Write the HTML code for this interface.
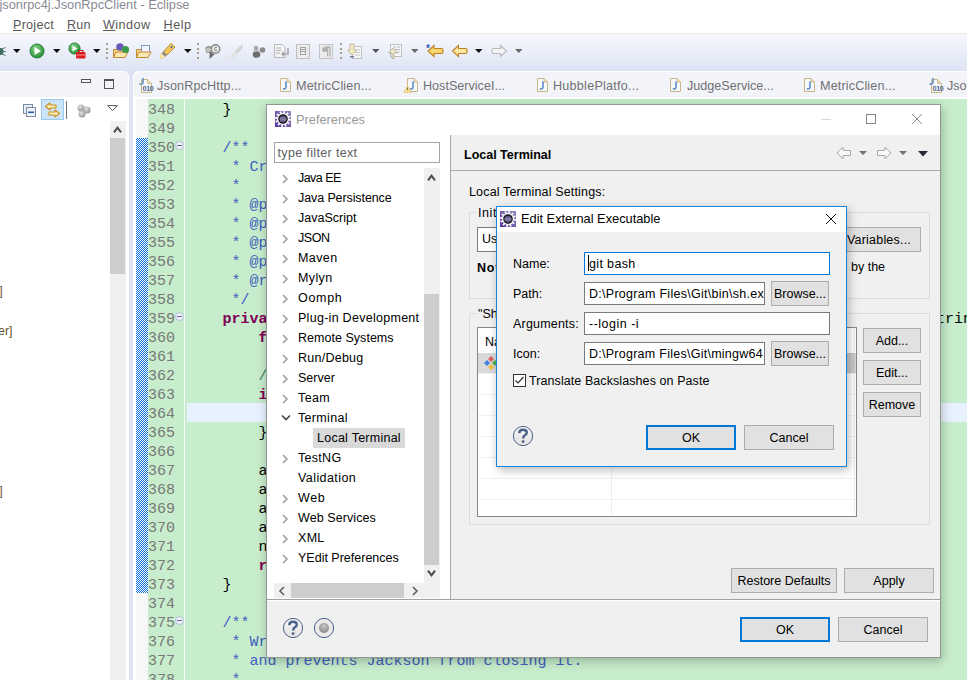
<!DOCTYPE html>
<html><head><meta charset="utf-8">
<style>
*{margin:0;padding:0;box-sizing:border-box}
html,body{width:967px;height:680px;overflow:hidden;background:#fff;position:relative;font-family:"Liberation Sans",sans-serif;font-size:12.5px;color:#000}
.a{position:absolute}
.t{position:absolute;white-space:pre;line-height:1}
/* title + menu */
#title{left:-0.5px;top:-1.5px;font-size:12.8px;color:#8a8a95}
.menu{top:19px;font-size:12.6px;color:#585858}
.menu u{text-decoration:underline;text-decoration-thickness:1px;text-underline-offset:0.5px}
#toolbar{left:0;top:33px;width:967px;height:38px;background:linear-gradient(#ebebea 0,#ebebea 1px,#f5f6fa 1px,#f1f4fc 25%,#dde3f3 100%)}
#below{left:0;top:71px;width:967px;height:609px;background:#dfe4f4}
/* left panel */
#lp{left:0;top:71px;width:129px;height:620px;background:#fff;border-top-right-radius:6px;border-right:1px solid #fff}
#lphead{left:0;top:71px;width:128px;height:26px;background:#f3f4fa;border-top-right-radius:6px;border-top:1px solid #fff}
/* editor */
#ed{left:133px;top:71px;width:840px;height:620px;background:#fff;border-top-left-radius:6px}
#edhead{left:134px;top:72px;width:840px;height:25px;background:#f3f4fa;border-top-left-radius:6px}
.tab{top:80px;font-size:12.6px;color:#707070}
#ruler{left:136px;top:99px;width:12px;height:581px;background:#f7f7f7}
#lnum{left:148px;top:99px;width:36px;height:581px;background:#c7edcc}
#code{left:185px;top:99px;width:782px;height:581px;background:#c7edcc}
#sep{left:184px;top:99px;width:1px;height:581px;background:#f6fbf6}
#checker{left:136px;top:138px;width:12px;height:455px;background:repeating-conic-gradient(#0a6fe0 0 25%,#fff 0 50%) 0 0/2px 2px;}
.ln{position:absolute;left:148px;width:27px;font-family:"Liberation Mono",monospace;font-size:15px;line-height:19px;color:#787878;white-space:pre}
.cl{position:absolute;left:186.4px;font-family:"Liberation Mono",monospace;font-size:15px;line-height:19px;color:#000;white-space:pre}
.jd{color:#3f5fbf}.kw{color:#7f0055;font-weight:bold}.cm{color:#3f7f5f}
/* dialogs */
#pref{left:266px;top:104px;width:675px;height:554px;background:#f0f0f0;border:1px solid #8f9a8f;box-shadow:1px 3px 10px rgba(0,0,0,.25)}
#edit{left:496px;top:206px;width:351px;height:261px;background:#f0f0f0;border:1px solid #1883d7;box-shadow:2px 3px 9px rgba(0,0,0,.28)}
.btn{position:absolute;background:#e1e1e1;border:1px solid #adadad;text-align:center;font-size:12.5px;color:#000}
.btn.def{border:2px solid #0078d7}
.tb{position:absolute;background:#fff;border:1px solid #7a7a7a;font-size:12.5px;white-space:pre;overflow:hidden}
</style></head><body>
<div class="t" id="title">jsonrpc4j.JsonRpcClient - Eclipse</div>
<div class="t menu" style="left:13px;letter-spacing:.25px"><u>P</u>roject</div>
<div class="t menu" style="left:67px;letter-spacing:.2px"><u>R</u>un</div>
<div class="t menu" style="left:103px;letter-spacing:.45px"><u>W</u>indow</div>
<div class="t menu" style="left:163.5px;letter-spacing:.55px"><u>H</u>elp</div>
<div class="a" id="toolbar"></div>
<div class="a" id="below"></div>
<svg class="a" style="left:0px;top:45px" width="8" height="12"><ellipse cx="0.5" cy="6.5" rx="3" ry="3.5" fill="#3e6e62"/><path d="M2 4L5.5 2.5M2.5 6.5H6M2 9L5.5 10.5" stroke="#4a7a6a" stroke-width="1"/></svg>
<svg class="a" style="left:13px;top:49px" width="8" height="5"><path d="M0 0H7.5L3.75 4Z" fill="#111"/></svg>
<svg class="a" style="left:29px;top:43px" width="16" height="16"><defs><radialGradient id="g1" cx=".4" cy=".35" r=".7"><stop offset="0" stop-color="#8ad88a"/><stop offset="1" stop-color="#1e8a2e"/></radialGradient></defs><circle cx="8" cy="8" r="7" fill="url(#g1)" stroke="#2a7a3a" stroke-width="1"/><path d="M5.5 4L12 8L5.5 12Z" fill="#fff"/></svg>
<svg class="a" style="left:53px;top:49px" width="8" height="5"><path d="M0 0H7.5L3.75 4Z" fill="#111"/></svg>
<svg class="a" style="left:68px;top:42px" width="18" height="17"><circle cx="6.5" cy="6.5" r="5.6" fill="url(#g1)" stroke="#2a7a3a" stroke-width=".9"/><path d="M4.5 3.5L9.5 6.5L4.5 9.5Z" fill="#fff"/><rect x="8" y="10" width="9.5" height="6.5" rx="1" fill="#e02020"/><rect x="10.5" y="8.5" width="4.5" height="2.5" fill="none" stroke="#c01818" stroke-width="1"/><path d="M8.5 13H17" stroke="#ffb0b0" stroke-width=".8"/></svg>
<svg class="a" style="left:93px;top:49px" width="8" height="5"><path d="M0 0H7.5L3.75 4Z" fill="#111"/></svg>
<div class="a" style="left:106px;top:43px;width:2px;height:2px;background:#a8a08a"></div>
<div class="a" style="left:106px;top:47.5px;width:2px;height:2px;background:#a8a08a"></div>
<div class="a" style="left:106px;top:52px;width:2px;height:2px;background:#a8a08a"></div>
<div class="a" style="left:106px;top:56.5px;width:2px;height:2px;background:#a8a08a"></div>
<svg class="a" style="left:112px;top:42px" width="18" height="17"><path d="M1.5 7.5H6L7 6H13V15.5H1.5Z" fill="#f8d890" stroke="#c08830"/><path d="M1.5 15.5L4 10H16L13 15.5Z" fill="#fbe8b0" stroke="#c08830"/><circle cx="8" cy="5" r="3.8" fill="#6a5ab8"/><circle cx="13.5" cy="7.5" r="3.6" fill="#3a9a4a"/></svg>
<svg class="a" style="left:135px;top:42px" width="18" height="17"><path d="M1.5 7.5H6L7 6H13V15.5H1.5Z" fill="#f8d890" stroke="#c08830"/><rect x="6.5" y="3.5" width="8" height="7" fill="#f0f4fc" stroke="#8098c0"/><path d="M1.5 15.5L4 10H16L13 15.5Z" fill="#fbe8b0" stroke="#c08830"/></svg>
<svg class="a" style="left:159px;top:42px" width="18" height="17"><path d="M12 1.5L16 5L8 13L4.5 9.5Z" fill="#f0c860" stroke="#c08830"/><path d="M4.5 9.5L8 13L6 15L2.5 11.5Z" fill="#909090"/><path d="M2.5 11.5L6 15L1 16.5Z" fill="#fff8c0" stroke="#e0c050" stroke-width=".6"/><circle cx="12.5" cy="5" r="1" fill="#3060b0"/></svg>
<svg class="a" style="left:184px;top:49px" width="8" height="5"><path d="M0 0H7.5L3.75 4Z" fill="#111"/></svg>
<div class="a" style="left:197px;top:43px;width:2px;height:2px;background:#a8a08a"></div>
<div class="a" style="left:197px;top:47.5px;width:2px;height:2px;background:#a8a08a"></div>
<div class="a" style="left:197px;top:52px;width:2px;height:2px;background:#a8a08a"></div>
<div class="a" style="left:197px;top:56.5px;width:2px;height:2px;background:#a8a08a"></div>
<svg class="a" style="left:204px;top:43px" width="17" height="16"><path d="M1.5 4.5H8.5V9.5H2.5Z" fill="#c4c4c4" stroke="#a0a0a0"/><path d="M3 3.5H7" stroke="#a0a0a0"/><circle cx="11.5" cy="6" r="4.3" fill="#e4e4e4" stroke="#8c8c8c" stroke-width="1.4"/><path d="M13 4.6Q12 3.8 11 4.4Q10 5.2 10.8 7.2Q12 8.2 13 7.4" stroke="#8c8c8c" stroke-width="1" fill="none"/><path d="M5.5 8V16L10.5 11.5Z" fill="#707070"/></svg>
<svg class="a" style="left:226px;top:43px" width="18" height="16"><path d="M16.5 0.5L9 8L11.5 11L16.5 5Z" fill="#d4d4d4"/><path d="M9 8L11.5 11L7 15L4 12.5Z" fill="#e2e2e2"/><path d="M4 12.5L7 15L2 15.5Z" fill="#e8e8e8"/><path d="M0.5 15.5H7" stroke="#e4e4e4"/></svg>
<svg class="a" style="left:252px;top:44px" width="15" height="15"><circle cx="4" cy="4" r="2.3" fill="#a8a8a8"/><circle cx="10.5" cy="6" r="2.8" fill="#8a8a8a"/><ellipse cx="4.5" cy="10.5" rx="3.8" ry="3.3" fill="#6e6e6e"/><path d="M1 6.5H8" stroke="#c0c0c0"/></svg>
<svg class="a" style="left:273px;top:43px" width="17" height="16"><path d="M1.5 1.5H9L12 4.5V14.5H1.5Z" fill="#f4f4f4" stroke="#b8b8b8"/><path d="M3 5H8M3 7.5H8M3 10H7" stroke="#b0b0b0"/><path d="M15 5V11H9M11 9L9 11L11 13" stroke="#a8a8a8" stroke-width="1.6" fill="none"/></svg>
<svg class="a" style="left:296px;top:43px" width="15" height="16"><rect x=".5" y="1.5" width="13" height="14" fill="#f0f0f0" stroke="#c0c0c0"/><path d="M2 3V14M12 3V14" stroke="#c8c8c8" stroke-dasharray="1 1"/><rect x="4.5" y="4.5" width="5" height="7" fill="none" stroke="#a0a0a0"/><path d="M5 6.5H9M5 8.5H9" stroke="#a0a0a0"/></svg>
<svg class="a" style="left:319px;top:43px" width="15" height="16"><rect x=".5" y="1.5" width="13" height="14" fill="#ececec" stroke="#c4c4c4"/><path d="M6.5 4H11M8.7 4V13.5M11 4V13.5" stroke="#b0b0b0" stroke-width="1.3"/><circle cx="5.8" cy="6.5" r="2.6" fill="#b0b0b0"/></svg>
<div class="a" style="left:340px;top:43px;width:2px;height:2px;background:#a8a08a"></div>
<div class="a" style="left:340px;top:47.5px;width:2px;height:2px;background:#a8a08a"></div>
<div class="a" style="left:340px;top:52px;width:2px;height:2px;background:#a8a08a"></div>
<div class="a" style="left:340px;top:56.5px;width:2px;height:2px;background:#a8a08a"></div>
<svg class="a" style="left:347px;top:43px" width="16" height="16"><rect x="5.5" y="3.5" width="9" height="12" fill="#f6f6f6" stroke="#c0c0c0"/><path d="M8 7H13M8 9.5H13M8 12H13" stroke="#c8c8c8"/><path d="M3 1H7V7H9.5L5 12L0.5 7H3Z" fill="#f4ecc8" stroke="#b8b090" stroke-width=".8"/><rect x="3" y="13" width="4" height="1.5" fill="#6a7aa0"/></svg>
<svg class="a" style="left:372px;top:49px" width="8" height="5"><path d="M0 0H7.5L3.75 4Z" fill="#555"/></svg>
<svg class="a" style="left:387px;top:43px" width="16" height="16"><rect x="3.5" y="1.5" width="11" height="12" fill="#f6f6f6" stroke="#c0c0c0"/><path d="M6 4H9M10 4H13M8 6.5H13M8 9H13" stroke="#b8b8c8"/><path d="M5 15.5V10H1.5L6 5L10.5 10H7V15.5Z" fill="#ede8d0" stroke="#b0a890" stroke-width=".8"/></svg>
<svg class="a" style="left:411px;top:49px" width="8" height="5"><path d="M0 0H7.5L3.75 4Z" fill="#666"/></svg>
<svg class="a" style="left:426px;top:43px" width="18" height="16"><path d="M8 2.5L2 8L8 13.5V10.5H15.5Q17 10.5 17 9V7Q17 5.5 15.5 5.5H8Z" fill="#f8d870" stroke="#c08020" stroke-width="1.1"/><text x="0" y="9" font-family="Liberation Sans" font-weight="bold" font-size="10" fill="#2a5ab0">*</text></svg>
<svg class="a" style="left:451px;top:43px" width="17" height="16"><path d="M7.5 2.5L1.5 8L7.5 13.5V10.5H14.5Q16 10.5 16 9V7Q16 5.5 14.5 5.5H7.5Z" fill="#fbe8a0" stroke="#c08020" stroke-width="1.1"/></svg>
<svg class="a" style="left:475px;top:49px" width="8" height="5"><path d="M0 0H7.5L3.75 4Z" fill="#111"/></svg>
<svg class="a" style="left:491px;top:43px" width="17" height="16"><path d="M9.5 2.5L15.5 8L9.5 13.5V10.5H2.5Q1 10.5 1 9V7Q1 5.5 2.5 5.5H9.5Z" fill="#f4f4f4" stroke="#b8b8b8" stroke-width="1.1"/></svg>
<svg class="a" style="left:515px;top:49px" width="8" height="5"><path d="M0 0H7.5L3.75 4Z" fill="#666"/></svg>
<div class="a" id="lp"></div>
<div class="a" id="lphead"></div>
<div class="a" id="ed"></div>
<div class="a" id="edhead"></div>
<div class="a" id="ruler"></div>
<div class="a" id="lnum"></div>
<div class="a" id="code"></div>
<div class="a" id="sep"></div>
<div class="a" id="checker"></div>
<div class="a" style="left:81px;top:79px;width:10px;height:4px;border:1px solid #555"></div>
<div class="a" style="left:104px;top:79px;width:10px;height:10px;border:1px solid #555;border-top-width:2px"></div>
<svg class="a" style="left:22px;top:103px" width="15" height="15"><rect x="1.5" y="1.5" width="9" height="9" fill="#e8eef4" stroke="#7a8aa0"/><rect x="4.5" y="4.5" width="9" height="9" fill="#f0f4f8" stroke="#7a8aa0"/><rect x="6" y="8.5" width="6" height="1.6" fill="#2a5ab0"/></svg>
<div class="a" style="left:41px;top:99px;width:23px;height:21px;background:#cce4f7;border:1px solid #99c9ef"></div>
<svg class="a" style="left:44px;top:102px" width="17" height="16"><path d="M1.5 4.5L6 1V3H12V6H6V8Z" fill="#fdeebb" stroke="#c8901e" stroke-width="1.1" stroke-linejoin="round"/><path d="M15.5 11.5L11 8V10H5V13H11V15Z" fill="#fdeebb" stroke="#c8901e" stroke-width="1.1" stroke-linejoin="round"/></svg>
<div class="a" style="left:66px;top:101px;width:1px;height:18px;background:#707070"></div>
<svg class="a" style="left:76px;top:103px" width="15" height="15"><defs><radialGradient id="gb" cx=".4" cy=".35" r=".7"><stop offset="0" stop-color="#e4e4e4"/><stop offset="1" stop-color="#8e8e8e"/></radialGradient></defs><circle cx="5" cy="5" r="3.5" fill="url(#gb)"/><circle cx="11" cy="7" r="3.5" fill="url(#gb)"/><circle cx="6" cy="11" r="3.5" fill="url(#gb)"/></svg>
<svg class="a" style="left:107px;top:105px" width="11" height="7"><path d="M0.6 0.6H10.4L5.5 5.6Z" fill="#fff" stroke="#555" stroke-width="1"/></svg>
<div class="a" style="left:110px;top:121px;width:16px;height:559px;background:#f0f0f0"></div>
<div class="a" style="left:110px;top:138px;width:15px;height:136px;background:#cdcdcd"></div>
<svg class="a" style="left:112px;top:125px" width="12" height="10"><path d="M2 7.3L5.5 2.6L9 7.3" stroke="#4a4a4a" stroke-width="2" fill="none"/></svg>
<div class="t" style="left:-0.8px;top:285px;color:#6a5a30">]</div>
<div class="t" style="left:-2px;top:325px;color:#6a5a30">er]</div>
<div class="t" style="left:-0.8px;top:485px;color:#6a5a30">]</div>
<svg class="a" style="left:138px;top:77px" width="18" height="17"><path d="M3.5 2.5H9.5L13.5 6.5V15.5H3.5Z" fill="#f6f8fc" stroke="#cbb486"/><path d="M9.5 2.5V6.5H13.5" fill="#ead9a8" stroke="#cbb486" stroke-width=".8"/><path d="M5 1V5.2Q5 7.5 1.5 7" stroke="#7ea2c8" stroke-width="2" fill="none"/><text x="4.6" y="14.3" font-family="Liberation Sans" font-weight="bold" font-size="7.2" fill="#506890" letter-spacing="-.4">010</text></svg>
<svg class="a" style="left:279px;top:77px" width="16" height="17"><path d="M1.5 1.5H8L11.5 5V14.5H1.5Z" fill="#f6f8fc" stroke="#cbb486"/><path d="M8 1.5V5H11.5" fill="#ead9a8" stroke="#cbb486" stroke-width=".8"/><path d="M7 4.5V10Q7 12.5 3.8 11.8" stroke="#6e98c8" stroke-width="1.8" fill="none"/></svg>
<svg class="a" style="left:403px;top:77px" width="18" height="17"><path d="M4.5 1.5H11L14.5 5V14.5H4.5Z" fill="#f6f8fc" stroke="#cbb486"/><path d="M11 1.5V5H14.5" fill="#ead9a8" stroke="#cbb486" stroke-width=".8"/><path d="M10 4.5V10Q10 12.5 6.8 11.8" stroke="#6e98c8" stroke-width="1.8" fill="none"/><path d="M4.5 8.5L8.3 15.5H0.7Z" fill="#f6dc98" stroke="#e6c878" stroke-width=".8" stroke-linejoin="round"/><path d="M4.5 10.5V13.2" stroke="#8a7040" stroke-width="1"/></svg>
<svg class="a" style="left:536px;top:77px" width="16" height="17"><path d="M1.5 1.5H8L11.5 5V14.5H1.5Z" fill="#f6f8fc" stroke="#cbb486"/><path d="M8 1.5V5H11.5" fill="#ead9a8" stroke="#cbb486" stroke-width=".8"/><path d="M7 4.5V10Q7 12.5 3.8 11.8" stroke="#6e98c8" stroke-width="1.8" fill="none"/></svg>
<svg class="a" style="left:669px;top:77px" width="16" height="17"><path d="M1.5 1.5H8L11.5 5V14.5H1.5Z" fill="#f6f8fc" stroke="#cbb486"/><path d="M8 1.5V5H11.5" fill="#ead9a8" stroke="#cbb486" stroke-width=".8"/><path d="M7 4.5V10Q7 12.5 3.8 11.8" stroke="#6e98c8" stroke-width="1.8" fill="none"/></svg>
<svg class="a" style="left:803px;top:77px" width="16" height="17"><path d="M1.5 1.5H8L11.5 5V14.5H1.5Z" fill="#f6f8fc" stroke="#cbb486"/><path d="M8 1.5V5H11.5" fill="#ead9a8" stroke="#cbb486" stroke-width=".8"/><path d="M7 4.5V10Q7 12.5 3.8 11.8" stroke="#6e98c8" stroke-width="1.8" fill="none"/></svg>
<svg class="a" style="left:928px;top:77px" width="18" height="17"><path d="M3.5 2.5H9.5L13.5 6.5V15.5H3.5Z" fill="#f6f8fc" stroke="#cbb486"/><path d="M9.5 2.5V6.5H13.5" fill="#ead9a8" stroke="#cbb486" stroke-width=".8"/><path d="M5 1V5.2Q5 7.5 1.5 7" stroke="#7ea2c8" stroke-width="2" fill="none"/><text x="4.6" y="14.3" font-family="Liberation Sans" font-weight="bold" font-size="7.2" fill="#506890" letter-spacing="-.4">010</text></svg>
<div class="t tab" style="left:157px;letter-spacing:.15px">JsonRpcHttp...</div>
<div class="t tab" style="left:296px;letter-spacing:.15px">MetricClien...</div>
<div class="t tab" style="left:423px">HostServiceI...</div>
<div class="t tab" style="left:553px;letter-spacing:.25px">HubblePlatfo...</div>
<div class="t tab" style="left:687px">JudgeService...</div>
<div class="t tab" style="left:820px;letter-spacing:.15px">MetricClien...</div>
<div class="t tab" style="left:947px">JsonRpcHttp...</div>
<div class="a" style="left:187px;top:403px;width:780px;height:19px;background:#e8f2fe"></div>
<div class="ln" style="top:101px">348</div>
<div class="cl" style="top:101px">    }</div>
<div class="ln" style="top:120px">349</div>
<div class="ln" style="top:139px">350</div>
<div class="cl" style="top:139px">    <span class="jd">/**</span></div>
<div class="ln" style="top:158px">351</div>
<div class="cl" style="top:158px"><span class="jd">     * Creates a request</span></div>
<div class="ln" style="top:177px">352</div>
<div class="cl" style="top:177px"><span class="jd">     *</span></div>
<div class="ln" style="top:196px">353</div>
<div class="cl" style="top:196px"><span class="jd">     * @param</span></div>
<div class="ln" style="top:215px">354</div>
<div class="cl" style="top:215px"><span class="jd">     * @param</span></div>
<div class="ln" style="top:234px">355</div>
<div class="cl" style="top:234px"><span class="jd">     * @param</span></div>
<div class="ln" style="top:253px">356</div>
<div class="cl" style="top:253px"><span class="jd">     * @param</span></div>
<div class="ln" style="top:272px">357</div>
<div class="cl" style="top:272px"><span class="jd">     * @return</span></div>
<div class="ln" style="top:291px">358</div>
<div class="cl" style="top:291px"><span class="jd">     */</span></div>
<div class="ln" style="top:310px">359</div>
<div class="cl" style="top:310px">    <span class="kw">private</span></div>
<div class="ln" style="top:329px">360</div>
<div class="cl" style="top:329px">        <span class="kw">final</span></div>
<div class="ln" style="top:348px">361</div>
<div class="ln" style="top:367px">362</div>
<div class="cl" style="top:367px">        <span class="cm">// </span></div>
<div class="ln" style="top:386px">363</div>
<div class="cl" style="top:386px">        <span class="kw">if</span></div>
<div class="ln" style="top:405px">364</div>
<div class="ln" style="top:424px">365</div>
<div class="cl" style="top:424px">        }</div>
<div class="ln" style="top:443px">366</div>
<div class="ln" style="top:462px">367</div>
<div class="cl" style="top:462px">        add</div>
<div class="ln" style="top:481px">368</div>
<div class="cl" style="top:481px">        add</div>
<div class="ln" style="top:500px">369</div>
<div class="cl" style="top:500px">        add</div>
<div class="ln" style="top:519px">370</div>
<div class="cl" style="top:519px">        add</div>
<div class="ln" style="top:538px">371</div>
<div class="cl" style="top:538px">        node</div>
<div class="ln" style="top:557px">372</div>
<div class="cl" style="top:557px">        <span class="kw">return</span></div>
<div class="ln" style="top:576px">373</div>
<div class="cl" style="top:576px">    }</div>
<div class="ln" style="top:595px">374</div>
<div class="ln" style="top:614px">375</div>
<div class="cl" style="top:614px">    <span class="jd">/**</span></div>
<div class="ln" style="top:633px">376</div>
<div class="cl" style="top:633px"><span class="jd">     * Writes</span></div>
<div class="ln" style="top:652px">377</div>
<div class="cl" style="top:652px"><span class="jd">     * and prevents Jackson from closing it.</span></div>
<div class="ln" style="top:671px">378</div>
<div class="cl" style="top:671px"><span class="jd">     *</span></div>
<div class="a" style="left:175px;top:141px;width:9px;height:9px;border:1px solid #b4bcd8;border-radius:50%;background:#eef2fa"><div class="a" style="left:1px;top:3px;width:5px;height:1.2px;background:#606880"></div></div>
<div class="a" style="left:175px;top:312px;width:9px;height:9px;border:1px solid #b4bcd8;border-radius:50%;background:#eef2fa"><div class="a" style="left:1px;top:3px;width:5px;height:1.2px;background:#606880"></div></div>
<div class="a" style="left:175px;top:616px;width:9px;height:9px;border:1px solid #b4bcd8;border-radius:50%;background:#eef2fa"><div class="a" style="left:1px;top:3px;width:5px;height:1.2px;background:#606880"></div></div>
<div class="cl" style="top:310px;left:927px">String</div>
<div class="a" id="pref"></div>
<div class="a" style="left:267px;top:105px;width:673px;height:30px;background:#fff"></div>
<svg class="a" style="left:275px;top:111px" width="16" height="16"><defs><linearGradient id="pga" x1="1" y1="0" x2="0" y2="1"><stop offset="0" stop-color="#9488b8"/><stop offset="1" stop-color="#5434a0"/></linearGradient><linearGradient id="pca" x1="0" y1="0" x2="0" y2="1"><stop offset="0" stop-color="#3a2e58"/><stop offset=".5" stop-color="#8a82a8"/><stop offset="1" stop-color="#4a3a78"/></linearGradient></defs><rect width="16" height="16" fill="url(#pga)"/><circle cx="8" cy="8" r="6" fill="#fff"/><circle cx="8" cy="8" r="6.6" fill="none" stroke="#fff" stroke-width="2.6" stroke-dasharray="1.73 1.73"/><circle cx="8" cy="8" r="4.2" fill="url(#pca)" stroke="#141414" stroke-width="1.2"/></svg>
<div class="t" style="left:296px;top:114px;font-size:12.8px;color:#9a9a9a">Preferences</div>
<div class="a" style="left:821px;top:119px;width:10px;height:1px;background:#dadada"></div>
<div class="a" style="left:866px;top:114px;width:10px;height:10px;border:1px solid #858585"></div>
<svg class="a" style="left:911px;top:113px" width="12" height="12"><path d="M1 1L11 11M11 1L1 11" stroke="#8a8a8a" stroke-width="1"/></svg>
<div class="a" style="left:267px;top:135px;width:183px;height:465px;background:#fff"></div>
<div class="tb" style="left:274px;top:142px;width:166px;height:21px;border-color:#a4a4ac;color:#5e5e5e;padding:3px 0 0 2.5px;letter-spacing:.35px">type filter text</div>
<div class="t" style="left:298px;top:172px;letter-spacing:-0.55px">Java EE</div>
<svg class="a" style="left:282px;top:174px" width="7" height="10"><path d="M1 1L5 5L1 9" stroke="#a0a0a0" stroke-width="1.6" fill="none"/></svg>
<div class="t" style="left:298px;top:192px;letter-spacing:-0.1px">Java Persistence</div>
<svg class="a" style="left:282px;top:194px" width="7" height="10"><path d="M1 1L5 5L1 9" stroke="#a0a0a0" stroke-width="1.6" fill="none"/></svg>
<div class="t" style="left:298px;top:212px">JavaScript</div>
<svg class="a" style="left:282px;top:214px" width="7" height="10"><path d="M1 1L5 5L1 9" stroke="#a0a0a0" stroke-width="1.6" fill="none"/></svg>
<div class="t" style="left:298px;top:232px;letter-spacing:-0.45px">JSON</div>
<svg class="a" style="left:282px;top:234px" width="7" height="10"><path d="M1 1L5 5L1 9" stroke="#a0a0a0" stroke-width="1.6" fill="none"/></svg>
<div class="t" style="left:298px;top:252px;letter-spacing:0.42px">Maven</div>
<svg class="a" style="left:282px;top:254px" width="7" height="10"><path d="M1 1L5 5L1 9" stroke="#a0a0a0" stroke-width="1.6" fill="none"/></svg>
<div class="t" style="left:298px;top:272px;letter-spacing:0.37px">Mylyn</div>
<svg class="a" style="left:282px;top:274px" width="7" height="10"><path d="M1 1L5 5L1 9" stroke="#a0a0a0" stroke-width="1.6" fill="none"/></svg>
<div class="t" style="left:298px;top:292px;letter-spacing:0.7px">Oomph</div>
<svg class="a" style="left:282px;top:294px" width="7" height="10"><path d="M1 1L5 5L1 9" stroke="#a0a0a0" stroke-width="1.6" fill="none"/></svg>
<div class="t" style="left:298px;top:312px;letter-spacing:0.28px">Plug-in Development</div>
<svg class="a" style="left:282px;top:314px" width="7" height="10"><path d="M1 1L5 5L1 9" stroke="#a0a0a0" stroke-width="1.6" fill="none"/></svg>
<div class="t" style="left:298px;top:332px;letter-spacing:0.03px">Remote Systems</div>
<svg class="a" style="left:282px;top:334px" width="7" height="10"><path d="M1 1L5 5L1 9" stroke="#a0a0a0" stroke-width="1.6" fill="none"/></svg>
<div class="t" style="left:298px;top:352px;letter-spacing:0.25px">Run/Debug</div>
<svg class="a" style="left:282px;top:354px" width="7" height="10"><path d="M1 1L5 5L1 9" stroke="#a0a0a0" stroke-width="1.6" fill="none"/></svg>
<div class="t" style="left:298px;top:372px">Server</div>
<svg class="a" style="left:282px;top:374px" width="7" height="10"><path d="M1 1L5 5L1 9" stroke="#a0a0a0" stroke-width="1.6" fill="none"/></svg>
<div class="t" style="left:298px;top:392px;letter-spacing:0.4px">Team</div>
<svg class="a" style="left:282px;top:394px" width="7" height="10"><path d="M1 1L5 5L1 9" stroke="#a0a0a0" stroke-width="1.6" fill="none"/></svg>
<div class="t" style="left:298px;top:412px;letter-spacing:0.33px">Terminal</div>
<svg class="a" style="left:281px;top:414px" width="10" height="8"><path d="M1 1.5L5 5.5L9 1.5" stroke="#444" stroke-width="1.6" fill="none"/></svg>
<div class="a" style="left:313px;top:428px;width:92px;height:20px;background:#d9d9d9"></div>
<div class="t" style="left:317px;top:432px;letter-spacing:0.25px">Local Terminal</div>
<div class="t" style="left:298px;top:452px;letter-spacing:0.3px">TestNG</div>
<svg class="a" style="left:282px;top:454px" width="7" height="10"><path d="M1 1L5 5L1 9" stroke="#a0a0a0" stroke-width="1.6" fill="none"/></svg>
<div class="t" style="left:298px;top:472px;letter-spacing:0.42px">Validation</div>
<div class="t" style="left:298px;top:492px;letter-spacing:0.6px">Web</div>
<svg class="a" style="left:282px;top:494px" width="7" height="10"><path d="M1 1L5 5L1 9" stroke="#a0a0a0" stroke-width="1.6" fill="none"/></svg>
<div class="t" style="left:298px;top:512px;letter-spacing:0.08px">Web Services</div>
<svg class="a" style="left:282px;top:514px" width="7" height="10"><path d="M1 1L5 5L1 9" stroke="#a0a0a0" stroke-width="1.6" fill="none"/></svg>
<div class="t" style="left:298px;top:532px;letter-spacing:0.3px">XML</div>
<svg class="a" style="left:282px;top:534px" width="7" height="10"><path d="M1 1L5 5L1 9" stroke="#a0a0a0" stroke-width="1.6" fill="none"/></svg>
<div class="t" style="left:298px;top:552px">YEdit Preferences</div>
<svg class="a" style="left:282px;top:554px" width="7" height="10"><path d="M1 1L5 5L1 9" stroke="#a0a0a0" stroke-width="1.6" fill="none"/></svg>
<div class="a" style="left:424px;top:168px;width:16px;height:415px;background:#f0f0f0"></div>
<div class="a" style="left:424px;top:294px;width:15px;height:271px;background:#cdcdcd"></div>
<svg class="a" style="left:426px;top:173px" width="12" height="10"><path d="M2 7.3L5.5 2.6L9 7.3" stroke="#4a4a4a" stroke-width="2" fill="none"/></svg>
<svg class="a" style="left:426px;top:568px" width="12" height="10"><path d="M2 2.7L5.5 7.4L9 2.7" stroke="#4a4a4a" stroke-width="2" fill="none"/></svg>
<div class="a" style="left:274px;top:583px;width:166px;height:15px;background:#f0f0f0"></div>
<div class="a" style="left:291px;top:583px;width:113px;height:15px;background:#cdcdcd"></div>
<svg class="a" style="left:278px;top:586px" width="8" height="10"><path d="M6 1L2 5L6 9" stroke="#606060" stroke-width="1.6" fill="none"/></svg>
<svg class="a" style="left:411px;top:586px" width="8" height="10"><path d="M2 1L6 5L2 9" stroke="#606060" stroke-width="1.6" fill="none"/></svg>
<div class="a" style="left:450px;top:135px;width:1px;height:465px;background:#a9a9a9"></div>
<div class="t" style="left:464px;top:149px;font-weight:bold;font-size:12.5px">Local Terminal</div>
<div class="a" style="left:451px;top:170px;width:489px;height:1px;background:#a9a9a9"></div>
<svg class="a" style="left:836px;top:146px" width="16" height="14"><path d="M1 7L7 1.2V4.5H14.5V9.5H7V12.8Z" stroke="#a8a8a8" fill="#fafafa" stroke-linejoin="round"/></svg>
<svg class="a" style="left:859px;top:151px" width="9" height="5"><path d="M0 0H8L4 4Z" fill="#707070"/></svg>
<svg class="a" style="left:876px;top:146px" width="16" height="14"><path d="M15 7L9 1.2V4.5H1.5V9.5H9V12.8Z" stroke="#a8a8a8" fill="#fafafa" stroke-linejoin="round"/></svg>
<svg class="a" style="left:899px;top:151px" width="9" height="5"><path d="M0 0H8L4 4Z" fill="#707070"/></svg>
<svg class="a" style="left:918px;top:151px" width="11" height="6"><path d="M0 0H10L5 5.5Z" fill="#2e2438"/></svg>
<div class="t" style="left:469px;top:186px;letter-spacing:.16px">Local Terminal Settings:</div>
<div class="a" style="left:469px;top:212px;width:461px;height:87px;border:1px solid #dcdcdc"></div>
<div class="t" style="left:476px;top:207px;background:#f0f0f0;padding:0 2px;letter-spacing:.6px">Initial Working Directory</div>
<div class="tb" style="left:477px;top:227px;width:380px;height:25px;padding:4px 0 0 4px">Use</div>
<div class="btn" style="left:838px;top:227px;width:83px;height:25px;padding-top:5px;text-align:right;padding-right:9px;letter-spacing:.2px">Variables...</div>
<div class="t" style="left:477px;top:262px;font-weight:bold;letter-spacing:.8px">Note:</div>
<div class="t" style="left:851px;top:261px">by the</div>
<div class="a" style="left:469px;top:313px;width:461px;height:212px;border:1px solid #dcdcdc"></div>
<div class="t" style="left:476px;top:308px;background:#f0f0f0;padding:0 2px">"Show In" Menu</div>
<div class="a" style="left:477px;top:327px;width:380px;height:190px;background:#fff;border:1px solid #828790"></div>
<div class="t" style="left:485px;top:336px">Name</div>
<div class="a" style="left:478px;top:353px;width:378px;height:20px;background:#d9d9d9"></div>
<div class="a" style="left:478px;top:373px;width:378px;height:1px;background:#f0f0f0"></div>
<div class="a" style="left:478px;top:394px;width:378px;height:1px;background:#f0f0f0"></div>
<div class="a" style="left:478px;top:415px;width:378px;height:1px;background:#f0f0f0"></div>
<div class="a" style="left:478px;top:436px;width:378px;height:1px;background:#f0f0f0"></div>
<div class="a" style="left:478px;top:457px;width:378px;height:1px;background:#f0f0f0"></div>
<div class="a" style="left:478px;top:478px;width:378px;height:1px;background:#f0f0f0"></div>
<div class="a" style="left:478px;top:499px;width:378px;height:1px;background:#f0f0f0"></div>
<div class="a" style="left:611px;top:373px;width:1px;height:143px;background:#e8eef6"></div>
<div class="a" style="left:854px;top:328px;width:1px;height:188px;background:#e8eef6"></div>
<div class="a" style="left:847px;top:353px;width:8px;height:20px;background:#c8c8c8"></div>
<svg class="a" style="left:483px;top:355px" width="16" height="16"><path d="M8 1L11 4L8 7L5 4Z" fill="#e06060"/><path d="M12 5L15 8L12 11L9 8Z" fill="#50b050"/><path d="M8 9L11 12L8 15L5 12Z" fill="#f0c040"/><path d="M4 5L7 8L4 11L1 8Z" fill="#4080e0"/></svg>
<div class="btn" style="left:863px;top:328px;width:58px;height:25px;padding-top:5px">Add...</div>
<div class="btn" style="left:863px;top:360px;width:58px;height:25px;padding-top:5px">Edit...</div>
<div class="btn" style="left:863px;top:392px;width:58px;height:25px;padding-top:5px">Remove</div>
<div class="btn" style="left:731px;top:568px;width:106px;height:25px;padding-top:5px">Restore Defaults</div>
<div class="btn" style="left:844px;top:568px;width:90px;height:25px;padding-top:5px">Apply</div>
<div class="a" style="left:267px;top:599px;width:673px;height:1px;background:#a0a0a0"></div>
<div class="a" style="left:267px;top:600px;width:673px;height:1px;background:#fff"></div>
<svg class="a" style="left:282px;top:617px" width="22" height="22"><defs><linearGradient id="hg" x1="0" y1="0" x2="0" y2="1"><stop offset="0" stop-color="#f8f8f8"/><stop offset="1" stop-color="#e2e2e2"/></linearGradient></defs><circle cx="11" cy="11" r="9.6" fill="url(#hg)" stroke="#4a6088" stroke-width="1"/><path d="M7.3 8.2Q7.3 4.8 11 4.8Q14.8 4.8 14.8 7.6Q14.8 9.4 12.6 10.5Q11.2 11.3 11.2 13.6" stroke="#4a6088" stroke-width="2.4" fill="none"/><circle cx="11.1" cy="16.6" r="1.4" fill="#4a6088"/></svg>
<svg class="a" style="left:313px;top:617px" width="22" height="22"><defs><radialGradient id="bg2" cx=".5" cy=".3" r=".7"><stop offset="0" stop-color="#c8c8c8"/><stop offset="1" stop-color="#8a8a8a"/></radialGradient></defs><circle cx="11" cy="11" r="9.6" fill="#ececec" stroke="#4a6088" stroke-width="1"/><circle cx="11" cy="11" r="4.8" fill="url(#bg2)" stroke="#9a9a9a" stroke-width=".6"/></svg>
<div class="btn def" style="left:740px;top:617px;width:90px;height:25px;padding-top:4px">OK</div>
<div class="btn" style="left:838px;top:617px;width:90px;height:25px;padding-top:5px">Cancel</div>
<div class="a" id="edit"></div>
<div class="a" style="left:497px;top:207px;width:349px;height:25px;background:#fff"></div>
<svg class="a" style="left:500px;top:211px" width="16" height="16"><defs><linearGradient id="pgb" x1="1" y1="0" x2="0" y2="1"><stop offset="0" stop-color="#9488b8"/><stop offset="1" stop-color="#5434a0"/></linearGradient><linearGradient id="pcb" x1="0" y1="0" x2="0" y2="1"><stop offset="0" stop-color="#3a2e58"/><stop offset=".5" stop-color="#8a82a8"/><stop offset="1" stop-color="#4a3a78"/></linearGradient></defs><rect width="16" height="16" fill="url(#pgb)"/><circle cx="8" cy="8" r="6" fill="#fff"/><circle cx="8" cy="8" r="6.6" fill="none" stroke="#fff" stroke-width="2.6" stroke-dasharray="1.73 1.73"/><circle cx="8" cy="8" r="4.2" fill="url(#pcb)" stroke="#141414" stroke-width="1.2"/></svg>
<div class="t" style="left:521px;top:213px;font-size:12.8px">Edit External Executable</div>
<svg class="a" style="left:825px;top:213px" width="12" height="12"><path d="M1 1L11 11M11 1L1 11" stroke="#111" stroke-width="1"/></svg>
<div class="t" style="left:513px;top:258px">Name:</div>
<div class="t" style="left:513px;top:288px">Path:</div>
<div class="t" style="left:513px;top:318px;letter-spacing:.2px">Arguments:</div>
<div class="t" style="left:513px;top:348px">Icon:</div>
<div class="tb" style="left:584px;top:252px;width:246px;height:23px;border-color:#0078d7;padding:4px 0 0 4px;letter-spacing:.35px">git bash</div>
<div class="a" style="left:588px;top:255px;width:1px;height:16px;background:#000"></div>
<div class="tb" style="left:584px;top:282px;width:181px;height:23px;padding:4px 0 0 4px;letter-spacing:.28px">D:\Program Files\Git\bin\sh.exe</div>
<div class="btn" style="left:771px;top:281px;width:58px;height:25px;padding-top:5px">Browse...</div>
<div class="tb" style="left:584px;top:312px;width:246px;height:23px;padding:4px 0 0 4px;letter-spacing:.5px">--login -i</div>
<div class="tb" style="left:584px;top:342px;width:181px;height:23px;padding:4px 0 0 4px;letter-spacing:.26px">D:\Program Files\Git\mingw64</div>
<div class="btn" style="left:771px;top:341px;width:58px;height:25px;padding-top:5px">Browse...</div>
<svg class="a" style="left:513px;top:374px" width="13" height="13"><rect x="0.5" y="0.5" width="12" height="12" fill="#fff" stroke="#333"/><path d="M2.5 6.5L5 9L10.5 3" stroke="#333" stroke-width="1.2" fill="none"/></svg>
<div class="t" style="left:529px;top:375px;letter-spacing:.08px">Translate Backslashes on Paste</div>
<svg class="a" style="left:512px;top:425px" width="22" height="22"><defs><linearGradient id="hg" x1="0" y1="0" x2="0" y2="1"><stop offset="0" stop-color="#f8f8f8"/><stop offset="1" stop-color="#e2e2e2"/></linearGradient></defs><circle cx="11" cy="11" r="9.6" fill="url(#hg)" stroke="#4a6088" stroke-width="1"/><path d="M7.3 8.2Q7.3 4.8 11 4.8Q14.8 4.8 14.8 7.6Q14.8 9.4 12.6 10.5Q11.2 11.3 11.2 13.6" stroke="#4a6088" stroke-width="2.4" fill="none"/><circle cx="11.1" cy="16.6" r="1.4" fill="#4a6088"/></svg>
<div class="btn def" style="left:646px;top:425px;width:90px;height:25px;padding-top:4px">OK</div>
<div class="btn" style="left:744px;top:425px;width:90px;height:25px;padding-top:5px">Cancel</div>
</body></html>
